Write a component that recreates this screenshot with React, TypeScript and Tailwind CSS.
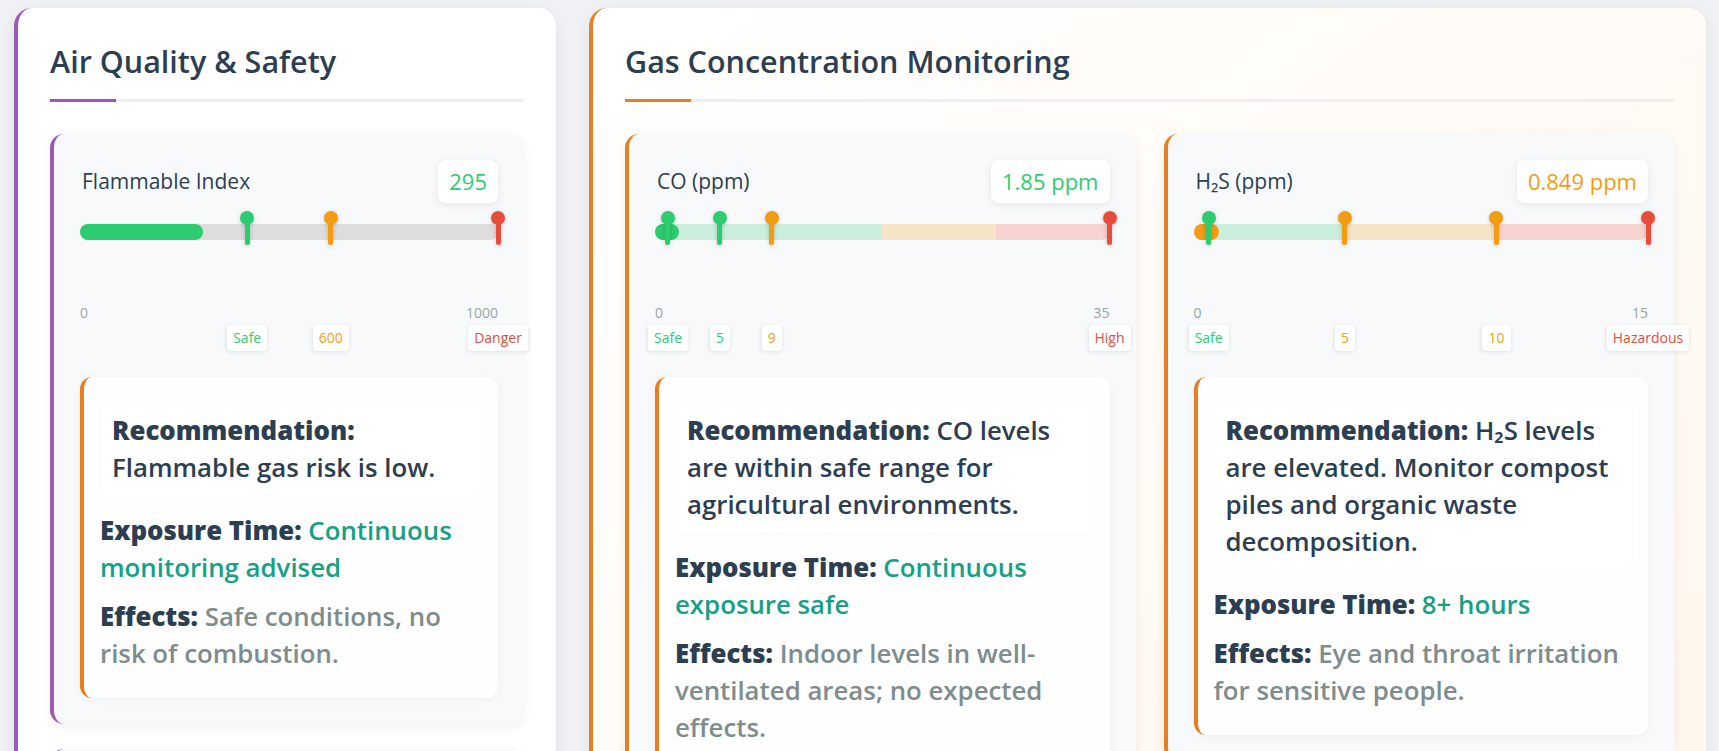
import React from "react";

type Marker = { at: number; color: string; label: string };
type Zone = { width: number; color: string };

type Gauge = {
  title: React.ReactNode;
  value: string;
  valueColor: string;
  amount: number;
  max: number;
  fill: string;
  track?: string;
  zones?: Zone[];
  markers: Marker[];
  border: string;
  recommendation: React.ReactNode;
  exposure: string;
  effects: string;
};

const GREEN = "#2ecc71";
const ORANGE = "#f39c12";
const RED = "#e74c3c";

const flammable: Gauge = {
  title: "Flammable Index",
  value: "295",
  valueColor: GREEN,
  amount: 295,
  max: 1000,
  fill: GREEN,
  track: "#dddddd",
  markers: [
    { at: 400, color: GREEN, label: "Safe" },
    { at: 600, color: ORANGE, label: "600" },
    { at: 1000, color: RED, label: "Danger" },
  ],
  border: "border-[#9b59b6]",
  recommendation: "Flammable gas risk is low.",
  exposure: "Continuous monitoring advised",
  effects: "Safe conditions, no risk of combustion.",
};

const gases: Gauge[] = [
  {
    title: "CO (ppm)",
    value: "1.85 ppm",
    valueColor: GREEN,
    amount: 1.85,
    max: 35,
    fill: GREEN,
    zones: [
      { width: 50, color: "rgba(46,204,113,0.22)" },
      { width: 25, color: "rgba(243,156,18,0.22)" },
      { width: 25, color: "rgba(231,76,60,0.22)" },
    ],
    markers: [
      { at: 1, color: GREEN, label: "Safe" },
      { at: 5, color: GREEN, label: "5" },
      { at: 9, color: ORANGE, label: "9" },
      { at: 35, color: RED, label: "High" },
    ],
    border: "border-[#e67e22]",
    recommendation: "CO levels are within safe range for agricultural environments.",
    exposure: "Continuous exposure safe",
    effects: "Indoor levels in well-ventilated areas; no expected effects.",
  },
  {
    title: "H₂S (ppm)",
    value: "0.849 ppm",
    valueColor: ORANGE,
    amount: 0.849,
    max: 15,
    fill: ORANGE,
    zones: [
      { width: 33.333, color: "rgba(46,204,113,0.22)" },
      { width: 33.333, color: "rgba(243,156,18,0.22)" },
      { width: 33.334, color: "rgba(231,76,60,0.22)" },
    ],
    markers: [
      { at: 0.5, color: GREEN, label: "Safe" },
      { at: 5, color: ORANGE, label: "5" },
      { at: 10, color: ORANGE, label: "10" },
      { at: 15, color: RED, label: "Hazardous" },
    ],
    border: "border-[#e67e22]",
    recommendation: "H₂S levels are elevated. Monitor compost piles and organic waste decomposition.",
    exposure: "8+ hours",
    effects: "Eye and throat irritation for sensitive people.",
  },
];

function PanelTitle({ text, accent }: { text: string; accent: string }) {
  return (
    <div className="relative border-b-[3px] border-[#ecf0f1] pb-[19px]">
      <h2 className="text-[30.5px] leading-[38px] font-semibold text-[#2c3e50]">{text}</h2>
      <div className={"absolute left-0 -bottom-[3px] h-[3px] w-[66px] " + accent} />
    </div>
  );
}

function GaugeCard({ g }: { g: Gauge }) {
  const pct = (n: number) => (n / g.max) * 100;
  return (
    <div
      className={
        "rounded-[14px] bg-[#f8f9fa] border-l-4 p-[26px] shadow-[0_3px_12px_rgba(0,0,0,0.06)] " + g.border
      }
    >
      <div className="flex items-center justify-between">
        <span className="pl-[2px] text-[21px] font-medium text-[#2c3e50]">{g.title}</span>
        <span
          className="rounded-lg bg-white px-[11px] py-[7px] text-[22px] leading-[29px] font-medium shadow-[0_2px_8px_rgba(0,0,0,0.08)]"
          style={{ color: g.valueColor }}
        >
          {g.value}
        </span>
      </div>

      <div className="relative mt-[21px] h-4">
        <div className="flex h-full overflow-hidden rounded-full" style={{ background: g.track }}>
          {g.zones?.map((z, i) => (
            <div key={i} className="h-full" style={{ width: `${z.width}%`, background: z.color }} />
          ))}
        </div>
        <div
          className="absolute left-0 top-0 h-full rounded-full"
          style={{ width: `${pct(g.amount)}%`, background: g.fill }}
        />
        {g.markers.map((m, i) => (
          <div
            key={i}
            className="absolute -top-[13px] flex w-[14px] -translate-x-1/2 flex-col items-center drop-shadow-[0_1px_2px_rgba(0,0,0,0.2)]"
            style={{ left: `${pct(m.at)}%` }}
          >
            <div className="h-[14px] w-[14px] rounded-full" style={{ background: m.color }} />
            <div className="-mt-[2px] h-[22px] w-[5px] rounded-b-full" style={{ background: m.color }} />
          </div>
        ))}
      </div>

      <div className="mt-[63px] flex justify-between text-[14px] leading-[20px] text-[#95a5a6]">
        <span>0</span>
        <span>{g.max}</span>
      </div>

      <div className="relative mt-[2px] h-[26px]">
        {g.markers.map((m, i) => (
          <span
            key={i}
            className="absolute top-0 -translate-x-1/2 whitespace-nowrap rounded bg-white px-[6px] text-[14px] leading-[26px] font-medium shadow-[0_1px_4px_rgba(0,0,0,0.1)]"
            style={{ left: `${pct(m.at)}%`, color: m.color }}
          >
            {m.label}
          </span>
        ))}
      </div>

      <div className="mt-[26px] rounded-[12px] border-l-4 border-[#e67e22] bg-white/90 px-4 pt-[25px] pb-[26px] text-[25.8px] leading-[37px] shadow-[0_2px_8px_rgba(0,0,0,0.04)]">
        <div className="rounded-lg bg-white px-[12px] py-[10px] font-semibold text-[#2c3e50] shadow-[0_1px_3px_rgba(0,0,0,0.025)]">
          <strong className="font-extrabold">Recommendation:</strong> {g.recommendation}
        </div>
        <p className="mt-4 font-semibold text-[#16a085]">
          <strong className="font-extrabold text-[#2c3e50]">Exposure Time:</strong> {g.exposure}
        </p>
        <p className="mt-3 font-semibold text-[#7f8c8d]">
          <strong className="font-extrabold text-[#2c3e50]">Effects:</strong> {g.effects}
        </p>
      </div>
    </div>
  );
}

export default function App() {
  return (
    <div className="flex min-h-screen items-start gap-[33px] bg-[#f0f2f6] pl-[14px] pr-[13px] pt-[8px] font-['Open_Sans','Noto_Sans',sans-serif]">
      <section className="w-[542px] shrink-0 rounded-[18px] border-l-4 border-[#9b59b6] bg-white px-8 pt-[34px] pb-8 shadow-[0_4px_20px_rgba(0,0,0,0.07)]">
        <PanelTitle text="Air Quality & Safety" accent="bg-[#9b59b6]" />
        <div className="mt-8 flex flex-col gap-[25px]">
          <GaugeCard g={flammable} />
          <div className="h-[240px] rounded-[14px] border-l-4 border-[#9b59b6] bg-[#f8f9fa] shadow-[0_3px_12px_rgba(0,0,0,0.06)]" />
        </div>
      </section>

      <section className="flex-1 rounded-[18px] border-l-4 border-[#e67e22] bg-gradient-to-br from-white to-[#fff6ec] px-8 pt-[34px] pb-8 shadow-[0_4px_20px_rgba(0,0,0,0.07)]">
        <PanelTitle text="Gas Concentration Monitoring" accent="bg-[#e67e22]" />
        <div className="mt-8 grid grid-cols-2 items-start gap-7">
          {gases.map((g, i) => (
            <GaugeCard key={i} g={g} />
          ))}
        </div>
      </section>
    </div>
  );
}
